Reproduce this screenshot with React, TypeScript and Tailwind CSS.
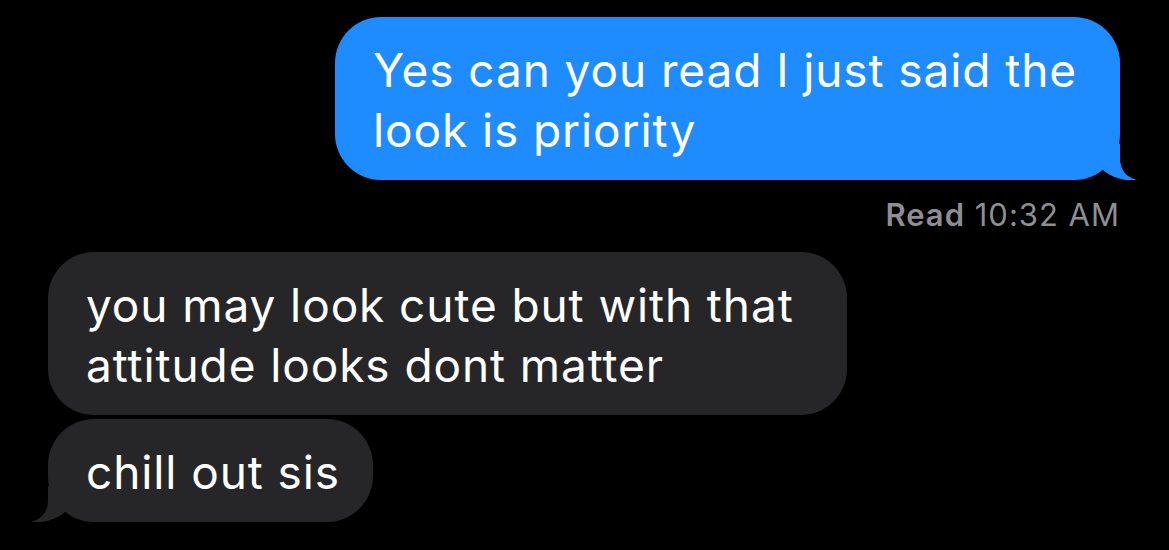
import type { ReactNode } from "react";

type Side = "in" | "out";

// little curled tail under the last bubble of a group
function Tail({ side, color }: { side: Side; color: string }) {
  const pos = side === "out" ? "right-[-18px]" : "left-[-18px] -scale-x-100";
  return (
    <svg
      className={`absolute bottom-0 ${pos}`}
      width="40"
      height="36"
      viewBox="0 0 40 36"
      fill={color}
    >
      <path d="M4 0 L22 0 L22 14 C22 26 28 33 39 36 C28 37.5 14 34 5 26 Z" />
    </svg>
  );
}

function Bubble({
  side,
  tail,
  width,
  children,
}: {
  side: Side;
  tail?: boolean;
  width: string;
  children: ReactNode;
}) {
  const color = side === "out" ? "#1e8cff" : "#262629";
  return (
    <div
      className={`relative ${width} whitespace-nowrap rounded-[46px] pt-[23px] pb-[20px] pl-[38px] text-[46px] leading-[60px] tracking-[0.9px] text-white ${
        side === "out" ? "bg-[#1e8cff]" : "bg-[#262629]"
      }`}
    >
      {children}
      {tail && <Tail side={side} color={color} />}
    </div>
  );
}

export default function App() {
  return (
    <div
      className="flex h-[550px] w-[1169px] flex-col overflow-hidden bg-black pt-[17px]"
      style={{ fontFamily: "Inter, 'Noto Sans', sans-serif" }}
    >
      {/* sent */}
      <div className="flex flex-col items-end pr-[49px]">
        <Bubble side="out" width="w-[785px]" tail>
          <div>Yes can you read I just said the</div>
          <div>look is priority</div>
        </Bubble>
        <div className="mt-[17px] text-[31px] leading-[36px] tracking-[1px] text-[#8e8e93]">
          <span className="font-semibold">Read</span> 10:32 AM
        </div>
      </div>

      {/* received */}
      <div className="mt-[19px] flex flex-col items-start gap-[4px] pl-[48px]">
        <Bubble side="in" width="w-[799px]">
          <div>you may look cute but with that</div>
          <div>attitude looks dont matter</div>
        </Bubble>
        <Bubble side="in" width="w-[325px]" tail>
          <div>chill out sis</div>
        </Bubble>
      </div>
    </div>
  );
}
